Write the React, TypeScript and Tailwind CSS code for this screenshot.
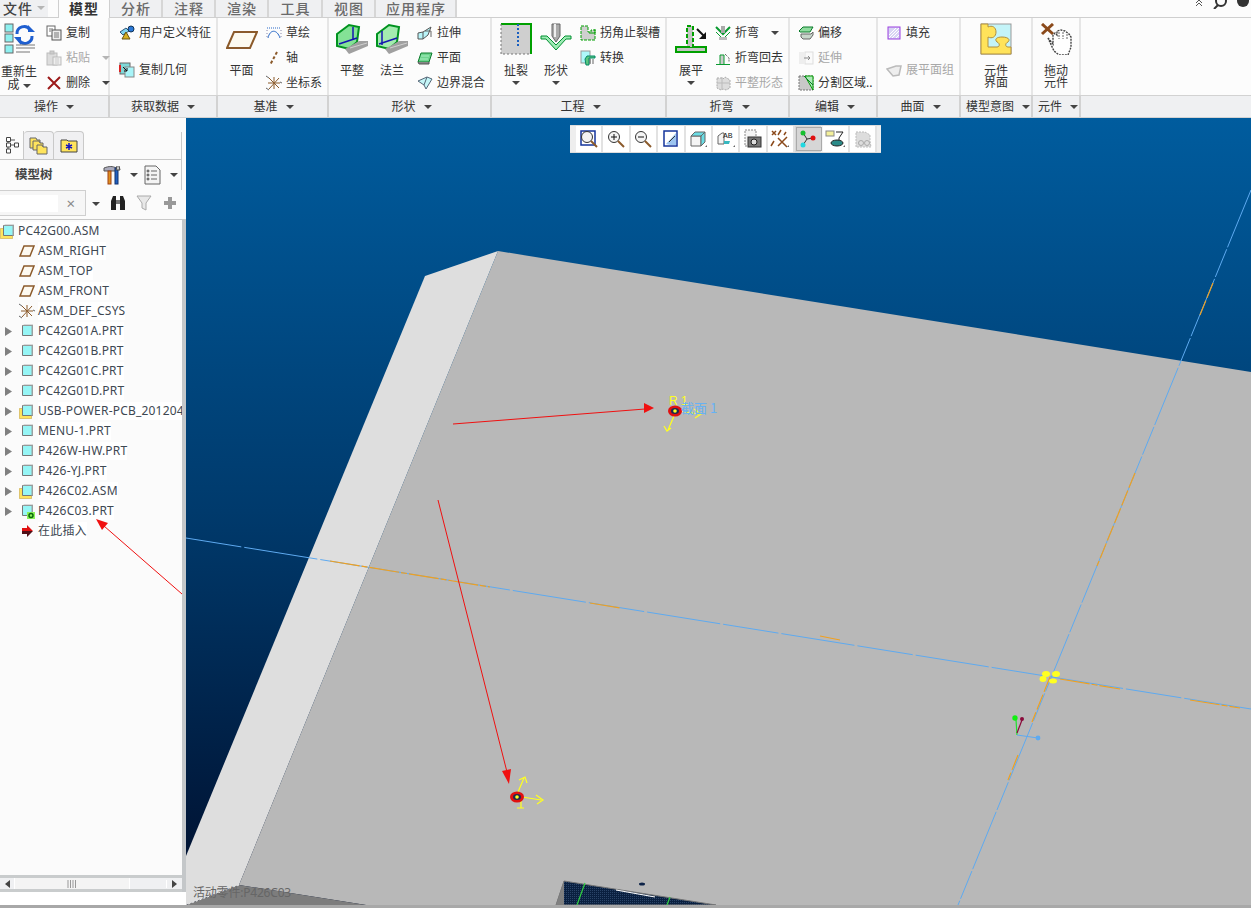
import React from "react";

const Caret = ({ grey }: { grey?: boolean }) => (
  <svg width="8" height="4" viewBox="0 0 8 4" className="inline-block shrink-0">
    <path d="M0 0h8L4 4z" fill={grey ? "#b5b5b5" : "#444"} />
  </svg>
);

// small ribbon icons
const S = ({ children }: { children: React.ReactNode }) => (
  <svg width="16" height="16" viewBox="0 0 16 16" className="shrink-0">
    {children}
  </svg>
);

const CopyIcon = () => (
  <S>
    <rect x="1" y="1" width="8" height="10" fill="#fff" stroke="#666" />
    <rect x="6" y="5" width="9" height="10" fill="#eee" stroke="#555" />
    <path d="M8 8h5M8 10h5M8 12h5M3 4h4M3 6h2" stroke="#777" />
  </S>
);
const PasteIcon = () => (
  <S>
    <rect x="1" y="3" width="10" height="12" fill="#ddd" stroke="#bbb" />
    <rect x="4" y="1" width="4" height="3" fill="#ccc" stroke="#bbb" />
    <rect x="7" y="7" width="8" height="8" fill="#eee" stroke="#bbb" />
    <path d="M9 9h4M9 11h4M9 13h4" stroke="#ccc" />
  </S>
);
const DeleteIcon = () => (
  <S>
    <path d="M2 2l12 12M14 2L2 14" stroke="#9c1a1a" strokeWidth="2" />
  </S>
);
const UdfIcon = () => (
  <S>
    <path d="M1 7l6-4 3 3-6 4z" fill="#7fd4ee" stroke="#357" />
    <circle cx="12" cy="4" r="3" fill="#2a78d8" stroke="#135" />
    <path d="M7 7l4 7H3z" fill="#d8b020" stroke="#665510" />
  </S>
);
const CopyGeomIcon = () => (
  <S>
    <rect x="1" y="1" width="10" height="11" fill="#7fd8d8" stroke="#666" />
    <rect x="6" y="5" width="9" height="10" fill="#a8f4f8" stroke="#888" />
    <path d="M1 3v7" stroke="#d22" strokeWidth="2" />
    <path d="M4 5l4 4M8 6v3H5" stroke="#111" fill="none" />
  </S>
);
const SketchIcon = () => (
  <S>
    <path d="M1 3h14" stroke="#2a6ac8" strokeDasharray="1 1" />
    <path d="M2 13C4 4 11 4 14 13" stroke="#2a6ac8" fill="none" />
    <path d="M1 5v9M15 5v9" stroke="#88a" strokeDasharray="1 2" />
  </S>
);
const AxisIcon = () => (
  <S>
    <path d="M11 2L4 15" stroke="#8b5a2b" strokeWidth="2" strokeDasharray="3 2" />
  </S>
);
const CsysIcon = () => (
  <S>
    <path d="M3 3l10 10M13 3L3 14M8 2v12M2 8h12" stroke="#8b5a2b" />
    <path d="M0 1l3 2M14 7l2 1M0 13l3 2" stroke="#666" />
  </S>
);
const ExtrudeIcon = () => (
  <S>
    <path d="M1 8l5-1v7H1zM6 7l8-5-3 8-5 4" fill="#b8f4f8" stroke="#555" />
    <path d="M8 6h6v6" stroke="#666" fill="none" />
  </S>
);
const FlatIcon = () => (
  <S>
    <path d="M4 3h11l-3 9H1z" fill="#6fd48f" stroke="#0a7a2a" />
    <path d="M4 6h8M3 9h8" stroke="#a8eec0" />
    <path d="M1 12l1 2h10l0-2" fill="#888" stroke="#555" />
  </S>
);
const BlendIcon = () => (
  <S>
    <path d="M1 6l9-4 5 2-6 10-2-4z" fill="#c4f6f8" stroke="#567" />
    <path d="M7 10l3-8" stroke="#567" />
  </S>
);
const ReliefIcon = () => (
  <S>
    <path d="M1 1h7v6h3v-2h4v10H1z" fill="#cfcfcf" stroke="#00a000" strokeDasharray="3 1" />
    <path d="M9 8h6v-4" stroke="#00a000" fill="none" />
  </S>
);
const ConvertIcon = () => (
  <S>
    <rect x="1" y="1" width="9" height="12" fill="#aef8fa" stroke="#999" />
    <path d="M5 9l2-3h8v2H9v7H6z" fill="#5cc67f" stroke="#086" />
    <path d="M10 9v5M13 9v5" stroke="#666" />
  </S>
);
const BendIcon = () => (
  <S>
    <path d="M1 2l7 7 7-7" stroke="#0a9a30" strokeWidth="2" fill="none" />
    <path d="M1 7l7 7 7-7" stroke="#0a9a30" strokeWidth="1" fill="none" />
    <rect x="6" y="1" width="4" height="7" fill="#aaa" />
    <path d="M4 12h8v3H4z" fill="#bbb" />
  </S>
);
const BendBackIcon = () => (
  <S>
    <path d="M1 14h14v1H1z" fill="#0a9a30" />
    <path d="M5 14V5h4v9" fill="#ccc" stroke="#0a9a30" />
    <path d="M10 4l4 4v4" stroke="#333" strokeDasharray="1 1" fill="none" />
  </S>
);
const FlatStateIcon = () => (
  <S>
    <path d="M2 3h5l1 1 2-2 5 3v8l-4 2-3-1-2 1-4-2z" fill="#ddd" stroke="#aaa" strokeDasharray="2 1" />
    <path d="M7 2v13M2 8h13" stroke="#bbb" />
  </S>
);
const OffsetIcon = () => (
  <S>
    <path d="M1 6l4-4h10l-3 5H2z" fill="#8fdc9f" stroke="#0a7a2a" />
    <path d="M3 9h10l2-2v3l-3 4H5l-2-2z" fill="#c9d8cc" stroke="#666" />
  </S>
);
const ExtendIcon = () => (
  <S>
    <rect x="1" y="2" width="5" height="12" fill="#eee" />
    <rect x="7" y="2" width="8" height="12" fill="#fafafa" stroke="#ddd" />
    <path d="M6 8h6M10 6l2 2-2 2" stroke="#888" fill="none" />
  </S>
);
const SplitIcon = () => (
  <S>
    <rect x="1" y="1" width="14" height="14" fill="#c8c8c8" stroke="#777" strokeDasharray="2 1" />
    <path d="M7 1h8v14z" fill="#aee8b8" stroke="#090" />
    <path d="M6 1l9 9" stroke="#0a7a2a" />
  </S>
);
const FillIcon = () => (
  <S>
    <rect x="2" y="2" width="12" height="12" fill="#d8d4f4" stroke="#9a3fe0" />
    <path d="M3 10l7-7M3 13L13 3M6 13l7-7M10 13l3-3" stroke="#fff" />
  </S>
);
const FlatQuiltIcon = () => (
  <S>
    <path d="M1 7l9-3h5l-2 9-6 1z" fill="#eee" stroke="#bbb" strokeWidth="1.5" />
  </S>
);

// large ribbon icons
const L = ({ children }: { children: React.ReactNode }) => (
  <svg width="32" height="32" viewBox="0 0 32 32" className="shrink-0">
    {children}
  </svg>
);

const cubeSmall = (y: number) => (
  <g key={y}>
    <rect x="2" y={y} width="8" height="8" fill="#8ef0f0" stroke="#666" />
  </g>
);
const RegenIcon = () => (
  <L>
    {cubeSmall(1)}
    {cubeSmall(11)}
    {cubeSmall(22)}
    <path d="M14 11a7 7 0 0 1 13-4" stroke="#1f5fd0" strokeWidth="3" fill="none" />
    <path d="M25 2v7h7z" fill="#1f5fd0" />
    <path d="M29 13a7 7 0 0 1-13 4" stroke="#1f5fd0" strokeWidth="3" fill="none" />
    <path d="M11 14l7 8v-8z" fill="#1f5fd0" />
    <path d="M13 22h19M13 25h19M13 29h14" stroke="#777" />
  </L>
);
const PlaneIcon = () => (
  <L>
    <path d="M8 9h23l-7 16H1z" fill="#fdfaf0" stroke="#8b5a2b" strokeWidth="2" />
  </L>
);
const FlatWallIcon = ({ flange }: { flange?: boolean }) => (
  <L>
    <path d="M1 11L13 2l10 2-2 15-8 7-12-3z" fill={flange ? "#a4ecb0" : "#84e296"} stroke="#00931f" strokeWidth="2" />
    <path d="M3 21l18-6" stroke="#1414b0" strokeWidth="1.5" />
    {flange ? <path d="M6 8v14" stroke="#1414b0" strokeWidth="1.5" /> : <path d="M17 4v13" stroke="#1414b0" strokeWidth="1.5" />}
    <path d="M9 26l14-8h9v5l-19 8z" fill="#a0a0a0" />
    <path d="M14 25l17-5" stroke="#d0d0d0" />
  </L>
);
const RipIcon = () => (
  <L>
    <rect x="1" y="1" width="30" height="30" fill="#cfcfcf" />
    <path d="M1 1h30v30" stroke="#00a000" strokeWidth="2" fill="none" />
    <path d="M1 1v30h30" stroke="#777" strokeDasharray="2 2" fill="none" />
    <path d="M18 1v24" stroke="#1a5fc0" strokeWidth="2" strokeDasharray="2 2" />
  </L>
);
const FormIcon = () => (
  <L>
    <path d="M1 13h6l9 9 9-9h6v3h-5l-10 11L6 16H1z" fill="#9eeab4" stroke="#009030" />
    <path d="M12 1h8v12l-4 6-4-6z" fill="#aaa" stroke="#666" />
    <path d="M15 1v13" stroke="#eee" strokeWidth="2" />
  </L>
);
const UnbendIcon = () => (
  <L>
    <path d="M1 24h30v5H1z" fill="#c4c4c4" stroke="#00a000" strokeWidth="2" />
    <path d="M12 3h6v21h-6z" fill="#c4c4c4" stroke="#00a000" strokeWidth="2" strokeDasharray="4 2" />
    <path d="M22 6l8 8" stroke="#111" strokeWidth="2" />
    <path d="M31 16h-7l7-7z" fill="#111" />
  </L>
);
const PuzzleIcon = () => (
  <L>
    <rect x="1" y="1" width="30" height="30" fill="#c4f4f8" stroke="#999" />
    <path
      d="M1 1h7v3c4-2 8 0 8 5s-4 7-8 5v10h9c3 0 3-4 0-5-3-3 0-5 5-5s9 2 6 5c-3 1-3 5 0 5h3v7H1z"
      fill="#ffe35a"
      stroke="#b09040"
    />
  </L>
);
const DragIcon = () => (
  <L>
    <path d="M2 1l11 10M13 1L2 11" stroke="#8b4a1b" strokeWidth="3" />
    <path
      d="M8 15l5 6v-9l2-2 2 2v-4l4-1 4 1 4 3 2 3v10l-3 8h-9l-5-4z"
      fill="#fff"
      stroke="#444"
      strokeWidth="1.400"
      strokeDasharray="2 1"
    />
    <path d="M19 9v7M23 9v7M27 11v6" stroke="#666" strokeDasharray="2 1" />
  </L>
);

type SmallProps = { icon: React.ReactNode; label: string; grey?: boolean; caret?: boolean; className?: string };

const Small = ({ icon, label, grey, caret, className = "" }: SmallProps) => (
  <div className={`flex h-[25px] items-center gap-1 whitespace-nowrap ${className}`}>
    {icon}
    <span className={grey ? "text-[#a8a8a8]" : "text-[#333]"}>{label}</span>
    {caret && (
      <span className="ml-2 flex">
        <Caret grey={grey} />
      </span>
    )}
  </div>
);

type LargeProps = { icon: React.ReactNode; label: string; width: string; caret?: boolean };

const Large = ({ icon, label, width, caret }: LargeProps) => (
  <div className={`flex shrink-0 flex-col items-center ${width}`}>
    <div className="mt-[5px] flex h-8">{icon}</div>
    <span className="mt-[9px] text-[#333] leading-[14px]">{label}</span>
    {caret && (
      <span className="mt-[3px] flex">
        <Caret />
      </span>
    )}
  </div>
);

type GroupProps = { width: string; label: string; pad?: string; labelPad?: string; children: React.ReactNode };

const Group = ({ width, label, pad = "", labelPad = "pl-[4px]", children }: GroupProps) => (
  <div className={`flex shrink-0 flex-col ${width}`}>
    <div className={`flex h-[77px] border-r-2 border-[#e6e6e6] ${pad}`}>{children}</div>
    <div className={`flex h-[23px] items-center justify-center gap-2 border-y border-r-2 border-[#d2d2d2] bg-[#eff0f2] text-[#333] ${labelPad}`}>
      <span>{label}</span>
      <Caret />
    </div>
  </div>
);

const Col = ({ children, className = "" }: { children: React.ReactNode; className?: string }) => (
  <div className={`flex flex-col pt-[2px] ${className}`}>{children}</div>
);

const Tab = ({ label, width }: { label: string; width: string }) => (
  <div className={`flex h-[17px] shrink-0 items-center justify-center border-r-2 border-[#d6d6d6] bg-[#eff0f2] pb-px pl-px text-[14px] font-medium text-[#6a6a6a] tracking-[1px] ${width}`}>
    {label}
  </div>
);

const Ribbon = () => (
  <div className="flex">
    <Group width="w-[110px]" label="操作" labelPad="">
      <div className="flex w-[38px] shrink-0 flex-col items-center">
        <div className="mt-[5px] flex h-8">
          <RegenIcon />
        </div>
        <span className="mt-[10px] text-center leading-[13px] text-[#333]">
          重新生
          <br />成 <Caret />
        </span>
      </div>
      <Col className="ml-2">
        <Small icon={<CopyIcon />} label="复制" />
        <Small icon={<PasteIcon />} label="粘贴" grey caret />
        <Small icon={<DeleteIcon />} label="删除" caret />
      </Col>
    </Group>
    <Group width="w-[108px]" label="获取数据" pad="pl-[9px]" labelPad="">
      <Col>
        <Small icon={<UdfIcon />} label="用户定义特征" />
        <Small icon={<CopyGeomIcon />} label="复制几何" className="mt-3" />
      </Col>
    </Group>
    <Group width="w-[111px]" label="基准" labelPad="pl-[2px]">
      <Large icon={<PlaneIcon />} label="平面" width="w-[47px]" />
      <Col className="ml-px">
        <Small icon={<SketchIcon />} label="草绘" />
        <Small icon={<AxisIcon />} label="轴" />
        <Small icon={<CsysIcon />} label="坐标系" />
      </Col>
    </Group>
    <Group width="w-[163px]" label="形状" pad="pl-[3px]">
      <Large icon={<FlatWallIcon />} label="平整" width="w-10" />
      <Large icon={<FlatWallIcon flange />} label="法兰" width="w-10" />
      <Col className="ml-[5px]">
        <Small icon={<ExtrudeIcon />} label="拉伸" />
        <Small icon={<FlatIcon />} label="平面" />
        <Small icon={<BlendIcon />} label="边界混合" />
      </Col>
    </Group>
    <Group width="w-[175px]" label="工程" pad="pl-1">
      <Large icon={<RipIcon />} label="扯裂" width="w-10" caret />
      <Large icon={<FormIcon />} label="形状" width="w-10" caret />
      <Col className="ml-1">
        <Small icon={<ReliefIcon />} label="拐角止裂槽" />
        <Small icon={<ConvertIcon />} label="转换" />
      </Col>
    </Group>
    <Group width="w-[123px]" label="折弯">
      <Large icon={<UnbendIcon />} label="展平" width="w-12" caret />
      <Col>
        <Small icon={<BendIcon />} label="折弯" caret />
        <Small icon={<BendBackIcon />} label="折弯回去" />
        <Small icon={<FlatStateIcon />} label="平整形态" grey />
      </Col>
    </Group>
    <Group width="w-[88px]" label="编辑" pad="pl-2">
      <Col>
        <Small icon={<OffsetIcon />} label="偏移" />
        <Small icon={<ExtendIcon />} label="延伸" grey />
        <Small icon={<SplitIcon />} label="分割区域.." />
      </Col>
    </Group>
    <Group width="w-[83px]" label="曲面" pad="pl-2">
      <Col>
        <Small icon={<FillIcon />} label="填充" />
        <Small icon={<FlatQuiltIcon />} label="展平面组" grey className="mt-3" />
      </Col>
    </Group>
    <Group width="w-[72px]" label="模型意图">
      <div className="flex w-full flex-col items-center">
        <div className="mt-[5px] flex h-8">
          <PuzzleIcon />
        </div>
        <span className="mt-[10px] text-center leading-3 text-[#333]">
          元件
          <br />
          界面
        </span>
      </div>
    </Group>
    <Group width="w-[48px]" label="元件">
      <div className="flex w-full flex-col items-center">
        <div className="mt-[5px] flex h-8">
          <DragIcon />
        </div>
        <span className="mt-[10px] text-center leading-3 text-[#333]">
          拖动
          <br />
          元件
        </span>
      </div>
    </Group>
    <div className="flex flex-1 flex-col">
      <div className="h-[77px]" />
      <div className="h-[23px] border-y border-[#d2d2d2] bg-[#eff0f2]" />
    </div>
  </div>
);

// model tree
const PartIcon = ({ asm, plus }: { asm?: boolean; plus?: boolean }) => (
  <svg width="16" height="16" viewBox="0 0 16 16" className="shrink-0">
    {asm && <rect x="0.500" y="5.500" width="12" height="10" fill="#ffe45c" stroke="#c09a30" strokeDasharray="1 1" />}
    <path d="M3.500 2.500h10v10h-10z" fill="#96f6f6" stroke="#777" />
    <path d="M12.500 2.500l1.500-1v10.500l-1.500 1.500z" fill="#9aa0a0" />
    <path d="M3.500 2.500l1.500-1h9l-1.500 1z" fill="#b8bcbc" />
    {plus && (
      <>
        <rect x="8" y="9" width="8" height="7" fill="#8cf25a" />
        <circle cx="12" cy="12.500" r="2" fill="none" stroke="#0a6a0a" strokeWidth="1.500" />
      </>
    )}
  </svg>
);
const DatumPlaneSmall = () => (
  <svg width="16" height="12" viewBox="0 0 16 12" className="shrink-0">
    <path d="M5 1h10l-4 10H1z" fill="#fdf9f0" stroke="#8b5a2b" strokeWidth="1.500" />
  </svg>
);

type TreeRow = { name: string; kind: "part" | "asm" | "plane" | "csys" | "new" | "insert" };

const rows: TreeRow[] = [
  { name: "ASM_RIGHT", kind: "plane" },
  { name: "ASM_TOP", kind: "plane" },
  { name: "ASM_FRONT", kind: "plane" },
  { name: "ASM_DEF_CSYS", kind: "csys" },
  { name: "PC42G01A.PRT", kind: "part" },
  { name: "PC42G01B.PRT", kind: "part" },
  { name: "PC42G01C.PRT", kind: "part" },
  { name: "PC42G01D.PRT", kind: "part" },
  { name: "USB-POWER-PCB_201204", kind: "asm" },
  { name: "MENU-1.PRT", kind: "part" },
  { name: "P426W-HW.PRT", kind: "part" },
  { name: "P426-YJ.PRT", kind: "part" },
  { name: "P426C02.ASM", kind: "asm" },
  { name: "P426C03.PRT", kind: "new" },
  { name: "在此插入", kind: "insert" },
];

const RowIcon = ({ kind }: { kind: TreeRow["kind"] }) => {
  if (kind === "plane") return <DatumPlaneSmall />;
  if (kind === "csys") return <CsysIcon />;
  if (kind === "asm") return <PartIcon asm />;
  if (kind === "new") return <PartIcon plus />;
  if (kind === "insert")
    return (
      <svg width="16" height="14" viewBox="0 0 16 14" className="shrink-0">
        <path d="M3 4h5V1l6 6H3z" fill="#e01010" />
        <path d="M3 7h11l-6 6v-3H3z" fill="#501018" />
      </svg>
    );
  return <PartIcon />;
};

const ModelTree = () => (
  <div className="flex w-[186px] shrink-0 flex-col bg-[#fbfbfb]">
    <div className="mr-[4px] mt-[14px] flex h-7 shrink-0 items-end border-b border-r border-[#c9c9c9]">
      <div className="flex h-7 w-6 items-center justify-center border-r border-[#c9c9c9] bg-[#fbfbfb]">
        <svg width="14" height="18" viewBox="0 0 14 18">
          <path d="M6 4h4M6 9h4M3 6v2M3 11v2" stroke="#555" />
          <path d="M1.500 1.500h4v4h-4zM1.500 7h4v4h-4zM1.500 13h4v4h-4zM9.500 7h4v4h-4z" fill="#fff" stroke="#444" />
        </svg>
      </div>
      <div className="flex h-7 w-[30px] items-center justify-center rounded-t border-r border-t border-[#c9c9c9] bg-[#f0f0f2]">
        <svg width="19" height="19" viewBox="0 0 19 19">
          <path d="M1 2h6l1 2h3v8H1z" fill="#ffe45c" stroke="#666" />
          <path d="M4 5h6l1 2h3v7H4z" fill="#ffe45c" stroke="#666" />
          <path d="M8 9h5l1 2h4v7H8z" fill="#ffe45c" stroke="#666" />
        </svg>
      </div>
      <div className="flex h-7 w-[30px] items-center justify-center rounded-t border-r border-t border-[#c9c9c9] bg-[#f0f0f2]">
        <svg width="18" height="15" viewBox="0 0 18 15">
          <path d="M1 2h6l1 1h9v11H1z" fill="#ffe45c" stroke="#444" />
          <path d="M9 5v7M6 7l6 3M12 7l-6 3" stroke="#1414c0" strokeWidth="1.500" />
        </svg>
      </div>
    </div>
    <div className="mr-[4px] flex h-[30px] shrink-0 items-center border-r border-[#c9c9c9] pl-[15px]">
      <span className="w-[88px] text-[12.500px] font-bold text-[#444]">模型树</span>
      <svg width="20" height="20" viewBox="0 0 20 20" className="shrink-0">
        <path d="M1 3c5-2 9-2 12 0v3H1z" fill="#aab" stroke="#555" />
        <rect x="5" y="6" width="3" height="13" fill="#e09020" stroke="#a04010" />
        <rect x="12" y="3" width="3" height="16" fill="#2060c0" stroke="#103070" />
        <path d="M14 1l-1 4h4l-1-4" stroke="#444" fill="#ccc" />
      </svg>
      <span className="ml-[7px] flex">
        <Caret />
      </span>
      <svg width="17" height="20" viewBox="0 0 17 20" className="ml-[6px] shrink-0">
        <path d="M1 1h11l4 4v14H1z" fill="#f4f4f4" stroke="#666" />
        <path d="M7 6h6M7 10h6M7 14h6" stroke="#666" />
        <circle cx="4" cy="6" r="1" fill="none" stroke="#444" />
        <circle cx="4" cy="10" r="1" fill="none" stroke="#444" />
        <circle cx="4" cy="14" r="1" fill="none" stroke="#444" />
      </svg>
      <span className="ml-[9px] flex">
        <Caret />
      </span>
    </div>
    <div className="flex h-[30px] shrink-0 items-start border-b border-[#c9c9c9]">
      <div className="flex h-[26px] w-[86px] shrink-0 items-center justify-between border-y border-r border-[#cfcfcf] bg-[#f6f6f6] pr-[10px]">
        <div className="h-[17px] w-[58px] bg-white" />
        <span className="text-[15px] leading-none text-[#888]">×</span>
      </div>
      <span className="ml-[6px] mt-[12px] flex">
        <Caret />
      </span>
      <svg width="16" height="16" viewBox="0 0 16 16" className="ml-[10px] mt-[5px] shrink-0">
        <path d="M1 6l2-5h3v14H1zM15 6l-2-5h-3v14h5z" fill="#222" />
        <path d="M6 5h4v4H6z" fill="#777" />
      </svg>
      <svg width="16" height="16" viewBox="0 0 16 16" className="ml-[10px] mt-[5px] shrink-0">
        <path d="M1 1h14l-5 7v7l-4-2V8z" fill="#e8e8e8" stroke="#aaa" />
      </svg>
      <svg width="12" height="12" viewBox="0 0 12 12" className="ml-[12px] mt-[7px] shrink-0">
        <path d="M4 0h4v4h4v4H8v4H4V8H0V4h4z" fill="#999" />
      </svg>
    </div>
    <div className="flex min-h-0 flex-1 flex-col border-r-[4px] border-[#c4c7c9]">
      <div className="flex min-h-0 flex-1 flex-col overflow-hidden pt-px text-[12px] tracking-[0.2px] text-[#3e4852]">
        <div className="flex h-5 shrink-0 items-center gap-[2px]">
          <PartIcon asm />
          <span className="whitespace-nowrap bg-white">PC42G00.ASM</span>
        </div>
        {rows.map((row) => (
          <div key={row.name} className="flex h-5 shrink-0 items-center">
            <div className="flex w-[19px] shrink-0 justify-start pl-[5px]">
              {row.kind === "part" || row.kind === "asm" || row.kind === "new" ? (
                <svg width="7" height="9" viewBox="0 0 7 9">
                  <path d="M0 0l7 4.500L0 9z" fill="#808080" />
                </svg>
              ) : null}
            </div>
            <div className="flex w-[19px] shrink-0 items-center">
              <RowIcon kind={row.kind} />
            </div>
            <span className="whitespace-nowrap bg-white">{row.name}</span>
          </div>
        ))}
      </div>
      <div className="flex h-[17px] shrink-0 items-center border-y-[3px] border-[#c9cccd] bg-[#eff0f2]">
        <div className="flex w-[14px] shrink-0 justify-center">
          <svg width="5" height="8" viewBox="0 0 5 8">
            <path d="M5 0v8L0 4z" fill="#444" />
          </svg>
        </div>
        <div className="flex h-full w-[116px] shrink-0 items-center justify-center border-x border-white bg-[#f4f4f4]">
          <svg width="11" height="8" viewBox="0 0 11 8">
            <path d="M1 0v8M3.500 0v8M6 0v8M8.500 0v8" stroke="#999" />
          </svg>
        </div>
        <div className="flex-1" />
        <div className="flex w-[16px] shrink-0 justify-center border-l border-white">
          <svg width="5" height="8" viewBox="0 0 5 8">
            <path d="M0 0v8l5-4z" fill="#444" />
          </svg>
        </div>
      </div>
    </div>
    <div className="h-[13px] shrink-0 bg-white" />
  </div>
);

// graphics toolbar
const T = ({ children, active }: { children: React.ReactNode; active?: boolean }) => (
  <div
    className={`flex h-[26px] w-[27.400px] shrink-0 items-center justify-center border-r-2 ${
      active ? "border-[#f4f4f4] bg-[#d6d6d6] outline-1 -outline-offset-2 outline-[#aaa]" : "border-[#e2e2e2] bg-white"
    }`}
  >
    <svg width="20" height="20" viewBox="0 0 20 20">
      {children}
    </svg>
  </div>
);

const Glass = () => (
  <>
    <circle cx="8" cy="8" r="5.500" fill="#f4f4f4" stroke="#333" />
    <path d="M12 12l6 6" stroke="#8b5a2b" strokeWidth="2" />
  </>
);

const GraphicsToolbar = () => (
  <div className="absolute left-[384px] top-[7px] flex h-7 items-center border-y border-[#ddd] bg-[#eee] pl-[6px] pr-1">
    <T>
      <rect x="2" y="2" width="14" height="14" fill="#fff" stroke="#14349c" strokeWidth="1.500" />
      <Glass />
    </T>
    <T>
      <Glass />
      <path d="M5 8h6M8 5v6" stroke="#111" />
    </T>
    <T>
      <Glass />
      <path d="M5 8h6" stroke="#111" />
    </T>
    <T>
      <rect x="3" y="2" width="13" height="15" fill="#fff" stroke="#14349c" strokeWidth="1.500" />
      <path d="M5 15L15 4v12H9z" fill="#9cc4f0" />
      <path d="M8 13l6-6" stroke="#333" />
    </T>
    <T>
      <path d="M3 7h10v10H3z" fill="#f4f4f4" stroke="#666" />
      <path d="M3 7l4-4h10l-4 4zM13 7l4-4v10l-4 4z" fill="#6adce4" stroke="#666" />
      <path d="M17 18l2-2v2z" fill="#666" />
    </T>
    <T>
      <path d="M2 7l4-3h2v11H2z" fill="#f4f4f4" stroke="#666" />
      <path d="M8 12v3h5l1-3z" fill="#38b8c0" />
      <text x="7" y="9" fontSize="8" fill="#222" fontFamily="Liberation Mono, monospace">
        AB
      </text>
      <path d="M17 18l2-2v2z" fill="#666" />
    </T>
    <T>
      <rect x="2" y="1" width="11" height="16" fill="#f4f4f4" stroke="#888" strokeDasharray="2 1" />
      <rect x="5" y="8" width="13" height="10" fill="#777" stroke="#333" />
      <circle cx="11" cy="13" r="3" fill="#ddd" stroke="#222" />
    </T>
    <T>
      <path d="M2 2l4 4M6 2L2 6M8 9l9 9M17 8l-9 9M11 1l-3 5M16 3l-2 3M1 17l3-5" stroke="#8b4a1b" strokeWidth="1.500" />
      <path d="M17 18l2-2v2z" fill="#666" />
    </T>
    <T active>
      <path d="M5 4l4 6 6-1M9 10l-4 6" stroke="#333" fill="none" />
      <circle cx="5" cy="4" r="2.500" fill="#16c030" />
      <circle cx="15" cy="9" r="2.500" fill="#e01010" />
      <circle cx="5" cy="16" r="2.500" fill="#20d8e0" />
    </T>
    <T>
      <rect x="1" y="2" width="8" height="5" fill="#f4f09a" stroke="#888" />
      <path d="M11 3h7l-4 6v4" stroke="#222" fill="none" />
      <ellipse cx="12" cy="14" rx="6" ry="3" fill="#2a8a88" stroke="#222" />
      <path d="M18 18l2-2v2z" fill="#666" />
    </T>
    <T>
      <path d="M3 3h9l5 3v6l1 6H3z" fill="#ddd" stroke="#bbb" strokeDasharray="2 1" />
      <circle cx="8" cy="14" r="2.500" fill="none" stroke="#aaa" />
      <circle cx="14" cy="14" r="2.500" fill="none" stroke="#aaa" />
    </T>
  </div>
);

const Marker = ({ x, y, down }: { x: number; y: number; down?: boolean }) => (
  <g fill="none" stroke="#ffff20" strokeWidth="1.200">
    <path d={`M${x + 5} ${y}L${x + 24} ${y + 3}M${x + 19} ${y - 2}L${x + 26} ${y + 3}L${x + 20} ${y + 7}`} />
    {down ? (
      <path d={`M${x - 1} ${y + 5}L${x - 7} ${y + 19}M${x - 11} ${y + 15}L${x - 8} ${y + 20}L${x - 4} ${y + 17}`} />
    ) : (
      <path d={`M${x + 1} ${y - 5}L${x + 7} ${y - 19}M${x + 2} ${y - 17}L${x + 8} ${y - 20}L${x + 10} ${y - 14}M${x + 4} ${y + 4}V${y + 11}M${x} ${y + 11}H${x + 7}`} />
    )}
    <ellipse cx={x} cy={y} rx="7" ry="5.500" fill="#e01010" stroke="none" />
    <ellipse cx={x} cy={y} rx="4" ry="3" fill="#1a2a50" stroke="none" />
    <circle cx={x} cy={y} r="1.800" fill="#ffff20" stroke="none" />
  </g>
);

const ViewCanvas = () => (
  <div className="relative h-full min-w-0 flex-1 overflow-hidden">
    <svg width="1065" height="787" viewBox="186 118 1065 787" className="block">
      <defs>
        <linearGradient id="bg" x1="0" y1="0" x2="0" y2="1">
          <stop offset="0" stopColor="#005c9e" />
          <stop offset="0.5" stopColor="#003a6c" />
          <stop offset="1" stopColor="#000e2c" />
        </linearGradient>
        <pattern id="notch" width="2" height="2" patternUnits="userSpaceOnUse">
          <rect width="2" height="2" fill="#0a2040" />
          <rect width="1" height="1" fill="#2a4468" />
        </pattern>
      </defs>
      <rect x="186" y="118" width="1065" height="787" fill="url(#bg)" />
      <path d="M425 276L498 251L239 885L186 905V856z" fill="#dedede" />
      <path d="M498 251L1251 372V905H366L239 885z" fill="#b8b8b8" />
      <path d="M239 885L366 905H186z" fill="#7d7d7d" />
      <path d="M239 885L186 905" stroke="#eee" strokeDasharray="2 2" />

      <path d="M564 881L716 905H556z" fill="url(#notch)" stroke="#777" />
      <path d="M556 905L564 881V905z" fill="#808080" />
      <path d="M585 883L577 905M670 897L667 905" stroke="#30d040" strokeWidth="1.200" />
      <path d="M616 890L655 897" stroke="#fff" strokeWidth="1.200" />
      <ellipse cx="642" cy="884" rx="3" ry="1.500" fill="#0d2348" />

      <path d="M186 538L1251 709" stroke="#5eaaf0" strokeWidth="1" strokeDasharray="56 3 74 3" />
      <path d="M330 561L490 587M590 603L620 608M820 636L840 640M1060 679L1120 689M1190 700L1240 708" stroke="#f0a020" strokeWidth="1.200" strokeDasharray="30 2 6 2" />
      <path d="M1251 190L958 905" stroke="#5eaaf0" strokeWidth="1" strokeDasharray="62 2 30 2" />
      <path d="M1213 283L1200 315M1135 473L1097 566M1050 677L1032 722M1018 755L1008 780" stroke="#f0a020" strokeWidth="1.200" strokeDasharray="16 3" />

      <Marker x={675} y={411} down />
      <text x="669" y="405" fontSize="12" fill="#ffff20" fontFamily="Liberation Sans, sans-serif">
        R 1
      </text>
      <text x="681" y="413" fontSize="13" fill="#66b2f4" fontFamily="'Noto Sans CJK SC', sans-serif">
        截面 1
      </text>
      <Marker x={517} y={797} />

      <g fill="#ffff20">
        <ellipse cx="1046" cy="674" rx="4" ry="3" />
        <ellipse cx="1056" cy="674" rx="4" ry="3" />
        <ellipse cx="1043" cy="679" rx="3.500" ry="3" />
        <ellipse cx="1053" cy="681" rx="4" ry="2.500" />
      </g>
      <path d="M1016 720L1017 735" stroke="#20e030" strokeWidth="1.200" />
      <circle cx="1015" cy="718" r="2.700" fill="#10f010" />
      <path d="M1022 720L1017 733" stroke="#8a0a3a" strokeWidth="1.200" />
      <circle cx="1022" cy="719" r="2" fill="#8a0a3a" />
      <path d="M1017 735L1038 738" stroke="#5eaaf0" strokeWidth="1" />
      <circle cx="1038" cy="738" r="2.400" fill="#5eaaf0" />
    </svg>
    <GraphicsToolbar />
    <span className="absolute bottom-[4px] left-[7px] text-[12px] leading-4 tracking-[-0.2px] text-[#666]">
      活动零件:P426C03
    </span>
  </div>
);

export default function App() {
  return (
    <div className="relative flex h-[908px] w-[1251px] flex-col overflow-hidden bg-[#fcfcfc] text-[12px] [font-family:'Noto_Sans','Noto_Sans_CJK_SC',sans-serif]">
      <div className="flex h-[18px] shrink-0 border-b border-[#cfcfcf]">
        <div className="flex h-[17px] w-[48px] shrink-0 items-center gap-1 bg-[#eff0f2] pb-px pl-[3px] text-[14px] font-medium tracking-[1px] text-[#444]">
          文件
          <Caret grey />
        </div>
        <div className="w-[10px] shrink-0" />
        <div className="flex h-[18px] w-[52px] shrink-0 items-center justify-center border-x border-[#cfcfcf] bg-[#fcfcfc] pb-[2px] text-[14px] font-bold tracking-[1px] text-[#333]">
          模型
        </div>
        <Tab label="分析" width="w-[53px]" />
        <Tab label="注释" width="w-[53px]" />
        <Tab label="渲染" width="w-[53px]" />
        <Tab label="工具" width="w-[54px]" />
        <Tab label="视图" width="w-[53px]" />
        <Tab label="应用程序" width="w-[81px]" />
        <div className="flex flex-1 justify-end overflow-hidden">
          <svg width="60" height="12" viewBox="0 0 60 12" className="shrink-0 -translate-y-[3px]">
            <path d="M5 6l3-3 3 3M5 9l3-3 3 3" stroke="#555" fill="none" />
            <circle cx="30" cy="4" r="5" fill="none" stroke="#333" strokeWidth="2" />
            <path d="M27 8l-4 4" stroke="#333" strokeWidth="2" />
            <circle cx="52" cy="4" r="6" fill="#333" />
          </svg>
        </div>
      </div>
      <Ribbon />
      <div className="flex h-[787px] shrink-0">
        <ModelTree />
        <ViewCanvas />
      </div>
      <div className="h-[3px] shrink-0 bg-[#a8a8a8]" />

      {/* red arrows drawn over the tree and the model */}
      <svg width="1251" height="908" viewBox="0 0 1251 908" className="pointer-events-none absolute left-0 top-0">
        <g stroke="#f01010" strokeWidth="1" fill="#f01010">
          <path d="M453 424L645 409" />
          <path d="M654 408L644 403V413z" stroke="none" />
          <path d="M438 500L507 772" />
          <path d="M509 784L502 771L511 769z" stroke="none" />
          <path d="M182 594L104 526" />
          <path d="M96 519L108 523L102 530z" stroke="none" />
        </g>
      </svg>
    </div>
  );
}
